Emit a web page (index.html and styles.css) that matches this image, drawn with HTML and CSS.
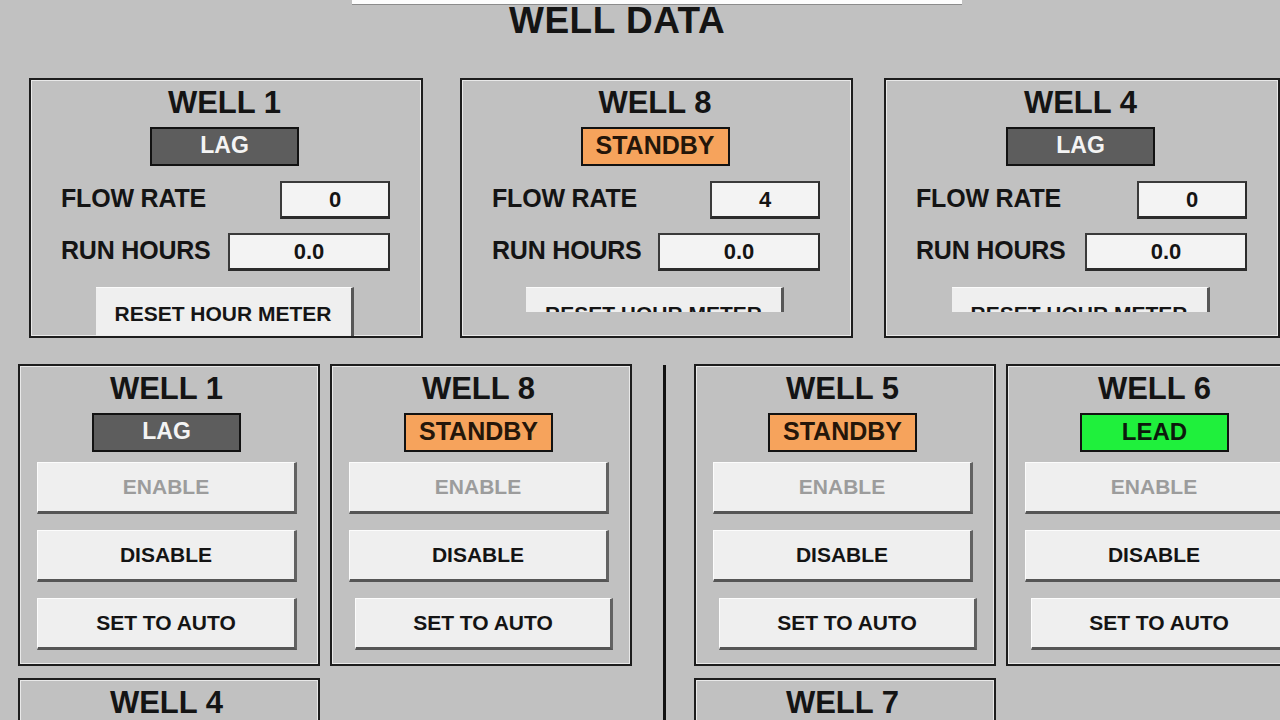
FILE: index.html
```html
<!DOCTYPE html>
<html lang="en">
<head>
<meta charset="utf-8">
<title>Well Data</title>
<link rel="stylesheet" href="styles.css">
</head>
<body>
<div class="screen">
  <div class="tag-strip"></div>
  <h1 class="screen-title">WELL DATA</h1>

  <div class="meter-row">
    <section class="meter-panel col-a">
      <h2 class="well-name">WELL 1</h2>
      <div class="badge badge-lag">LAG</div>
      <div class="reading first">
        <span class="reading-label">FLOW RATE</span>
        <span class="reading-value flow">0</span>
      </div>
      <div class="reading">
        <span class="reading-label">RUN HOURS</span>
        <span class="reading-value hours">0.0</span>
      </div>
      <div class="reset"><button class="reset-btn">RESET HOUR METER</button></div>
    </section>

    <section class="meter-panel col-b">
      <h2 class="well-name">WELL 8</h2>
      <div class="badge badge-standby">STANDBY</div>
      <div class="reading first">
        <span class="reading-label">FLOW RATE</span>
        <span class="reading-value flow">4</span>
      </div>
      <div class="reading">
        <span class="reading-label">RUN HOURS</span>
        <span class="reading-value hours">0.0</span>
      </div>
      <div class="reset partial"><button class="reset-btn">RESET HOUR METER</button></div>
    </section>

    <section class="meter-panel col-c">
      <h2 class="well-name">WELL 4</h2>
      <div class="badge badge-lag">LAG</div>
      <div class="reading first">
        <span class="reading-label">FLOW RATE</span>
        <span class="reading-value flow">0</span>
      </div>
      <div class="reading">
        <span class="reading-label">RUN HOURS</span>
        <span class="reading-value hours">0.0</span>
      </div>
      <div class="reset partial"><button class="reset-btn">RESET HOUR METER</button></div>
    </section>
  </div>

  <div class="control-area">
    <div class="control-group">
      <section class="ctrl-panel">
        <h2 class="well-name">WELL 1</h2>
        <div class="badge badge-lag">LAG</div>
        <button class="cmd cmd-off">ENABLE</button>
        <button class="cmd">DISABLE</button>
        <button class="cmd">SET TO AUTO</button>
      </section>
      <section class="ctrl-panel">
        <h2 class="well-name">WELL 8</h2>
        <div class="badge badge-standby">STANDBY</div>
        <button class="cmd cmd-off">ENABLE</button>
        <button class="cmd">DISABLE</button>
        <button class="cmd cmd-nudge">SET TO AUTO</button>
      </section>
      <section class="ctrl-panel">
        <h2 class="well-name">WELL 4</h2>
        <div class="badge badge-lag">LAG</div>
        <button class="cmd cmd-off">ENABLE</button>
        <button class="cmd">DISABLE</button>
        <button class="cmd">SET TO AUTO</button>
      </section>
    </div>

    <div class="divider"></div>

    <div class="control-group">
      <section class="ctrl-panel">
        <h2 class="well-name">WELL 5</h2>
        <div class="badge badge-standby">STANDBY</div>
        <button class="cmd cmd-off">ENABLE</button>
        <button class="cmd">DISABLE</button>
        <button class="cmd cmd-nudge">SET TO AUTO</button>
      </section>
      <section class="ctrl-panel">
        <h2 class="well-name">WELL 6</h2>
        <div class="badge badge-lead">LEAD</div>
        <button class="cmd cmd-off">ENABLE</button>
        <button class="cmd">DISABLE</button>
        <button class="cmd cmd-nudge">SET TO AUTO</button>
      </section>
      <section class="ctrl-panel">
        <h2 class="well-name">WELL 7</h2>
        <div class="badge badge-lag">LAG</div>
        <button class="cmd cmd-off">ENABLE</button>
        <button class="cmd">DISABLE</button>
        <button class="cmd">SET TO AUTO</button>
      </section>
    </div>
  </div>
</div>
</body>
</html>
```

FILE: styles.css
```css
html, body {
  margin: 0;
  padding: 0;
  width: 1280px;
  height: 720px;
  overflow: hidden;
  background: #c1c1c1;
}

.screen {
  font-family: "Liberation Sans", Arial, sans-serif;
  color: #141414;
  width: 1280px;
  height: 720px;
  overflow: hidden;
}

/* white entry strip along the top edge */
.tag-strip {
  margin-left: 352px;
  width: 610px;
  height: 4px;
  background: #fdfdfd;
  border-bottom: 1px solid #8c8c8c;
}

.screen-title {
  margin: 3px 0 0 0;
  padding-left: 509px;
  font-size: 37px;
  line-height: 26px;
  font-weight: bold;
  letter-spacing: 0.5px;
}

/* ---------- meter panels ---------- */
.meter-row {
  margin-top: 44px;
  display: grid;
  grid-template-columns: 29px 394px 37px 393px 31px 396px;
}

.col-a { grid-column: 2; }
.col-b { grid-column: 4; }
.col-c { grid-column: 6; }

.meter-panel,
.ctrl-panel {
  box-sizing: border-box;
  border: 2px solid #1d1d1d;
  box-shadow: inset 1px 1px 0 #e9e9e9, inset -1px -1px 0 #e9e9e9;
  display: flex;
  flex-direction: column;
  align-items: center;
  padding-top: 6px;
  overflow: hidden;
}

.meter-panel > *,
.ctrl-panel > * {
  flex-shrink: 0;
}

.meter-panel {
  height: 260px;
  padding-right: 3px;
}

.well-name {
  margin: 0;
  font-size: 31px;
  line-height: 34px;
  font-weight: bold;
}

.badge {
  box-sizing: border-box;
  margin-top: 7px;
  width: 149px;
  height: 39px;
  border: 2px solid #121212;
  font-size: 24px;
  line-height: 33px;
  font-weight: bold;
  text-align: center;
}

.badge-lag {
  background: #5d5d5d;
  color: #f4f4f4;
  font-size: 23px;
}

.badge-standby {
  background: #f6a35c;
  color: #24160a;
  font-size: 25px;
}

.badge-lead {
  background: #1ff03c;
  color: #0c1a0c;
}

.reading {
  align-self: stretch;
  display: flex;
  justify-content: space-between;
  align-items: center;
  padding: 0 28px 0 30px;
  height: 38px;
  margin-top: 14px;
}

.reading.first {
  margin-top: 15px;
}

.reading-label {
  font-size: 25px;
  line-height: 30px;
  margin-top: -5px;
  font-weight: bold;
  letter-spacing: -0.2px;
}

.reading-value {
  box-sizing: border-box;
  height: 38px;
  background: #f3f3f3;
  border: 2px solid #2b2b2b;
  border-top-color: #3a3a3a;
  border-left-color: #3a3a3a;
  border-bottom-width: 3px;
  font-size: 22px;
  line-height: 33px;
  font-weight: bold;
  text-align: center;
}

.reading-value.flow { width: 110px; }
.reading-value.hours { width: 162px; }

.reset {
  margin-top: 16px;
  width: 258px;
  height: 52px;
}

.reset.partial {
  height: 25px;
  overflow: hidden;
}

.reset-btn {
  box-sizing: border-box;
  width: 258px;
  height: 52px;
  padding: 0;
  background: #efefef;
  border: none;
  border-top: 1px solid #fbfbfb;
  border-right: 3px solid #575757;
  font-family: inherit;
  font-size: 21px;
  line-height: 38px;
  font-weight: bold;
  color: #151515;
  text-align: center;
  vertical-align: top;
}

/* ---------- command panels ---------- */
.control-area {
  margin-top: 26px;
  display: flex;
  align-items: flex-start;
}

.control-group {
  display: grid;
  grid-template-columns: 302px 302px;
  column-gap: 10px;
  row-gap: 12px;
  flex: none;
}

.control-group:first-child {
  margin-left: 18px;
}

.divider {
  flex: none;
  align-self: stretch;
  width: 3px;
  margin: 1px 28px 0 31px;
  background: #121212;
}

.ctrl-panel {
  width: 302px;
  height: 302px;
  padding-right: 5px;
}

.cmd {
  box-sizing: border-box;
  align-self: flex-start;
  margin: 16px 0 0 17px;
  width: 260px;
  height: 52px;
  padding: 0;
  background: #efefef;
  border-top: 1px solid #fcfcfc;
  border-left: 1px solid #fcfcfc;
  border-right: 3px solid #626262;
  border-bottom: 3px solid #555;
  font-family: inherit;
  font-size: 21px;
  font-weight: bold;
  color: #141414;
  text-align: center;
}

.cmd-nudge {
  margin-left: 23px;
  width: 258px;
}

.badge + .cmd {
  margin-top: 10px;
}

.cmd-off {
  color: #9c9c9c;
}
```
